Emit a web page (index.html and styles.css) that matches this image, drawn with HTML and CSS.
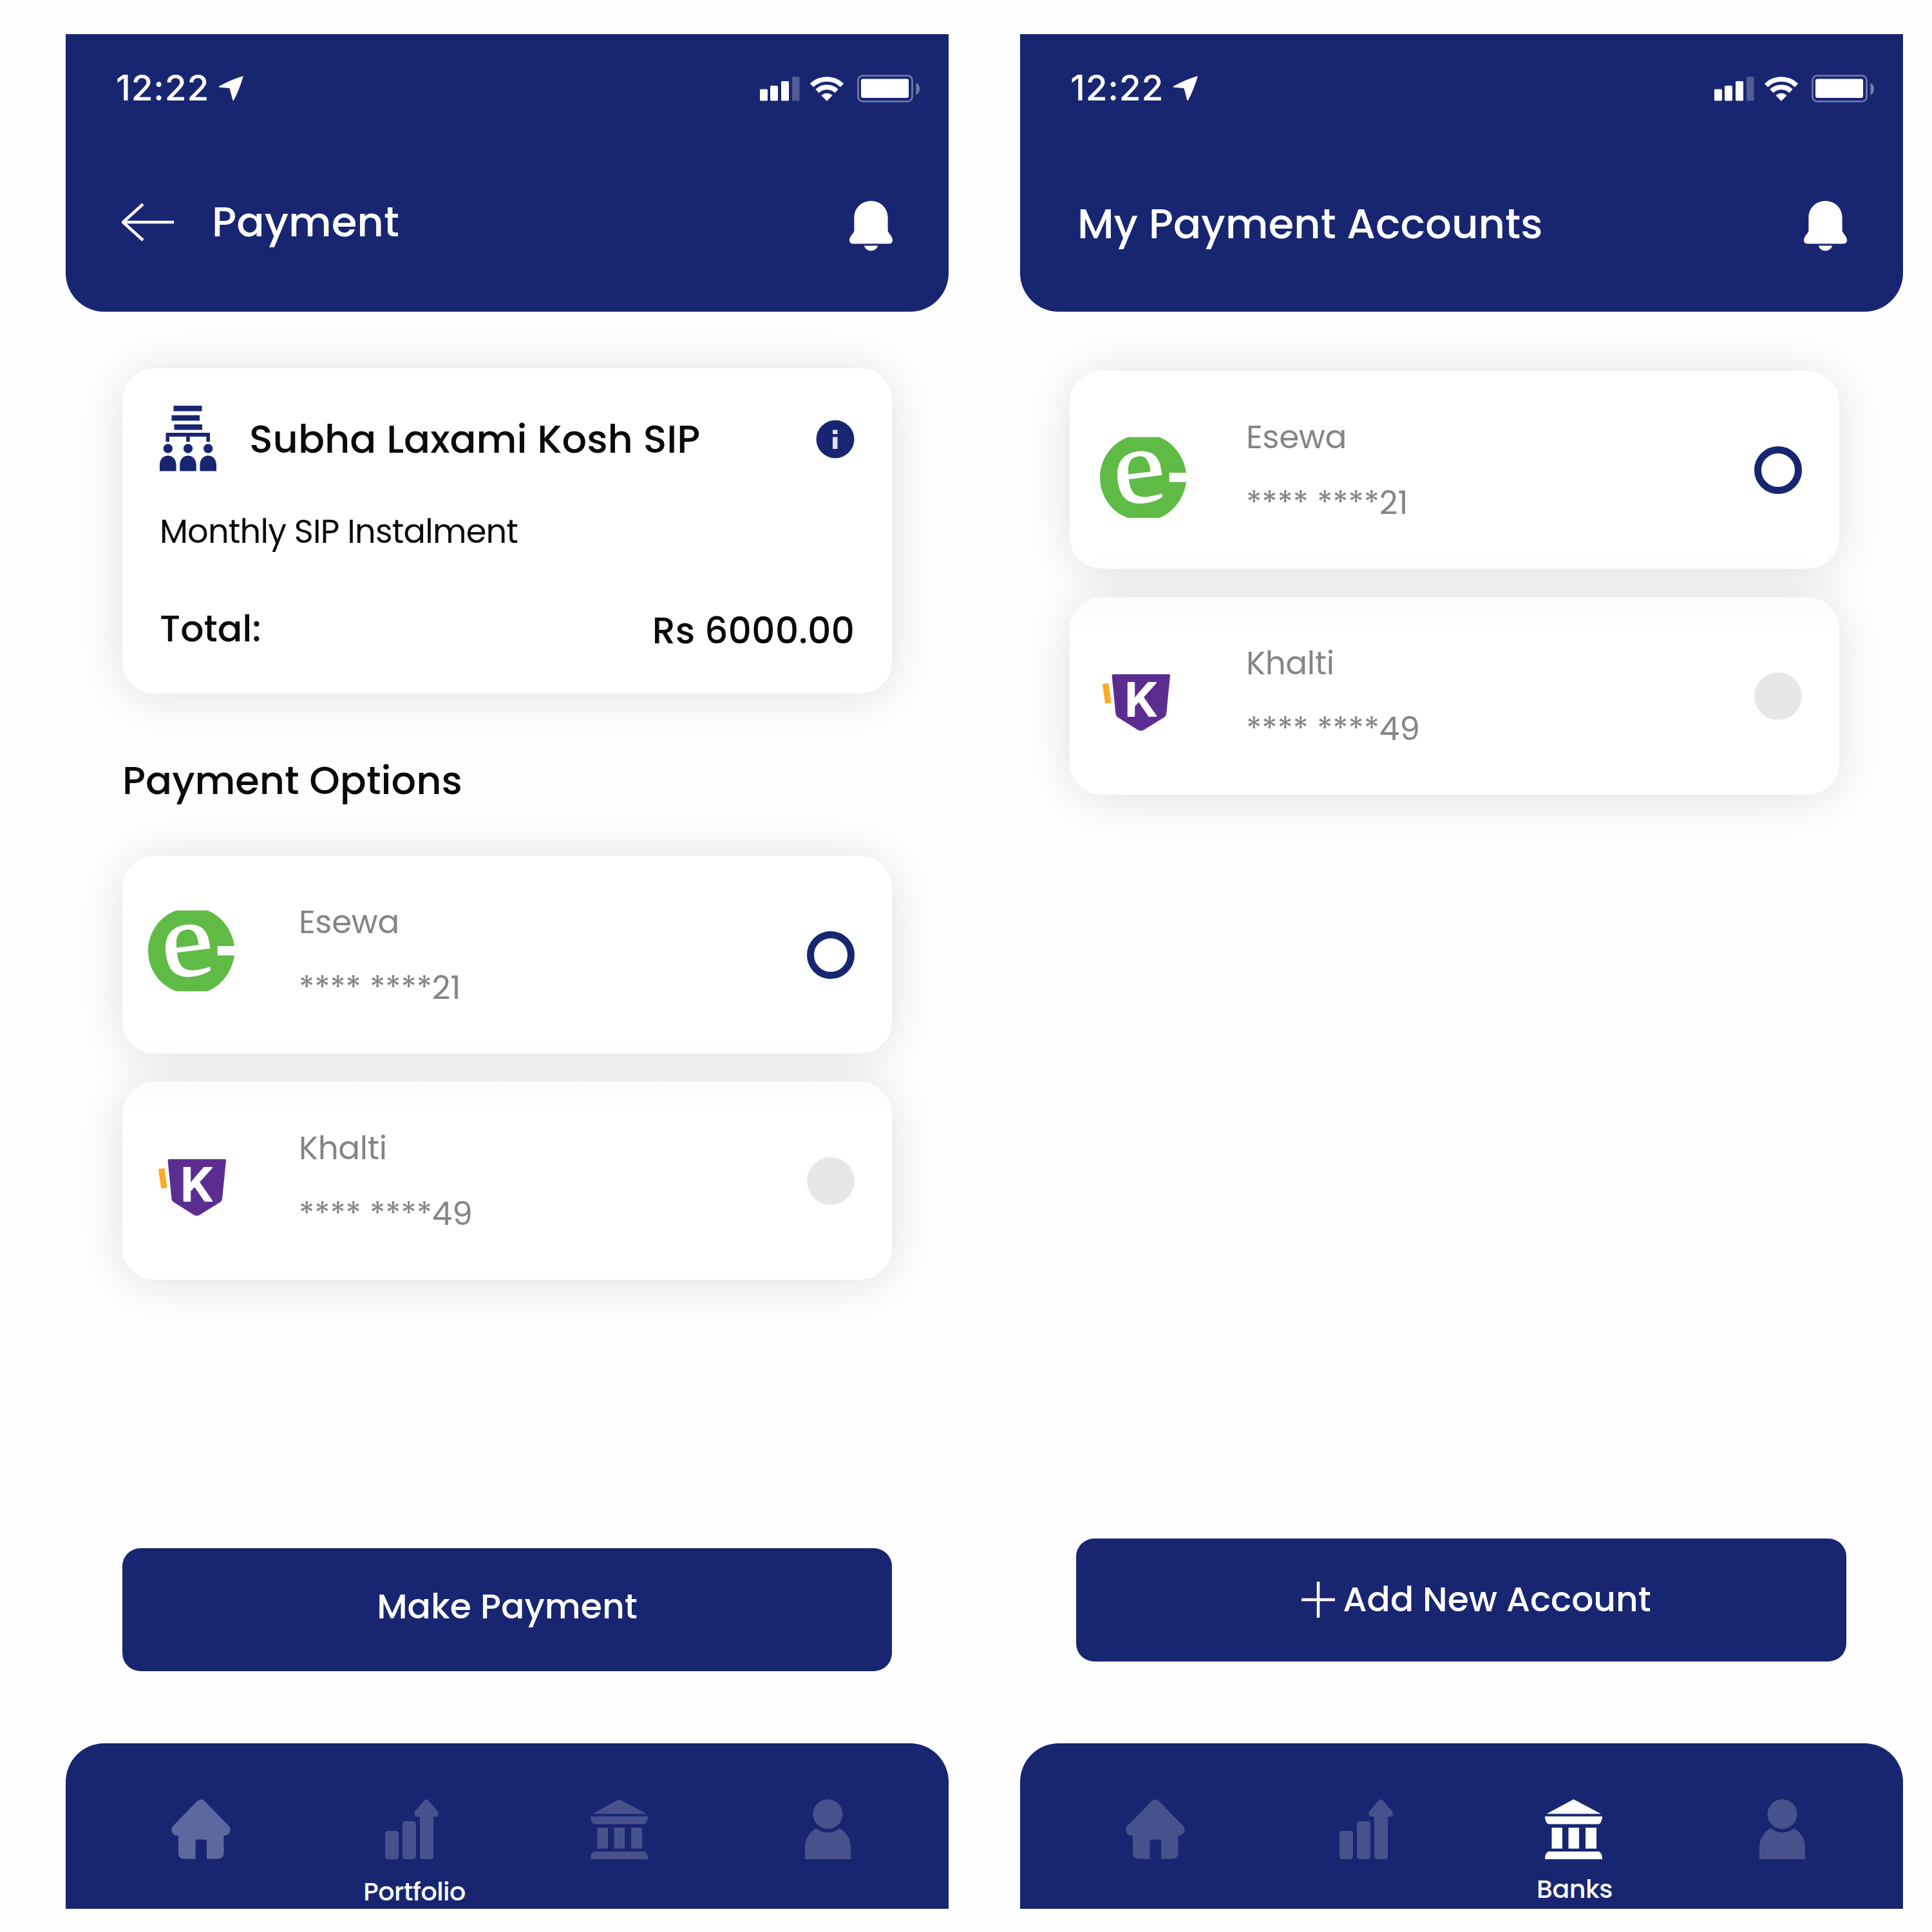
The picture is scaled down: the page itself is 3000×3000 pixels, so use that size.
FILE: index.html
```html
<!DOCTYPE html>
<html lang="en">
<head>
<meta charset="utf-8">
<title>Payments</title>
<link rel="stylesheet" href="styles.css">
</head>
<body>
<svg class="sprite" aria-hidden="true">
  <symbol id="i-location" viewBox="0 0 39 40"><path d="M38 1Q20 6 0 17V18.500L16.500 20 21.500 39H22.800Q31 24 38 1Z" fill="#fff"/></symbol>
  <symbol id="i-signal" viewBox="0 0 62 38"><g fill="#fff"><rect x="0" y="19.500" width="12" height="18" rx="1.500"/><rect x="16" y="14" width="12" height="23.500" rx="1.500"/><rect x="33" y="7" width="12" height="30.500" rx="1.500"/><rect x="50" y="0" width="11.500" height="37.500" rx="1.500" opacity=".25"/></g></symbol>
  <symbol id="i-wifi" viewBox="0 0 52 38"><g fill="none" stroke="#fff" stroke-width="7.600"><path d="M2.500 13.500A34 34 0 0 1 49.500 13.500"/><path d="M11 22.500A21.500 21.500 0 0 1 41 22.500"/></g><path d="M17.500 29.200A12.500 12.500 0 0 1 34.500 29.200L26 38Z" fill="#fff"/></symbol>
  <symbol id="i-battery" viewBox="0 0 98 43"><rect x="1.500" y="1.500" width="84" height="40" rx="7" fill="none" stroke="#fff" stroke-opacity=".4" stroke-width="2.600"/><rect x="6" y="6.500" width="74" height="29.500" rx="3" fill="#fff"/><path d="M91.500 12.500Q97 15.500 97 22T91.500 31.500Z" fill="#fff" opacity=".4"/></symbol>
  <symbol id="i-bell" viewBox="0 0 68 79"><path d="M34 0C49 0 60.500 11.500 60.500 26V47Q61 49 64 53 68 58 68 62 67.500 67.500 62 67.500H6Q.500 67.500 0 62 0 58 4 53 7 49 7.500 47V26C7.500 11.500 19 0 34 0ZM23 70.500H45Q42 78.500 34 78.500T23 70.500Z" fill="#fff"/></symbol>
  <symbol id="i-sip" viewBox="0 0 88 103"><g fill="#182672"><path d="M21.500 0H65.500V8.500H21.500ZM18.500 14.700H62V23.200H18.500ZM22.500 29H66V37.500H22.500ZM9.500 42H78V56H72.500V48H46.800V56H41.200V48H15V56H9.500Z"/><circle cx="12.800" cy="66.500" r="7.200"/><circle cx="44" cy="66.500" r="7.200"/><circle cx="75.200" cy="66.500" r="7.200"/><path d="M0 101.500V92C0 72.500 25.600 72.500 25.600 92V101.500ZM31.200 101.500V92C31.200 72.500 56.800 72.500 56.800 92V101.500ZM62.400 101.500V92C62.400 72.500 88 72.500 88 92V101.500Z"/></g></symbol>
  <symbol id="i-esewa" viewBox="0 0 136 127"><path d="M45 0H92C112 7 131 28 135 56H108.500V70.500H135C131 98 113 119 92 127H45C20 119 0 94 0 63.500S20 8 45 0Z" fill="#60bb46"/></symbol>
  <symbol id="i-khalti" viewBox="0 0 107 89"><path d="M2 16 9.500 15 13.500 43.500 6 44.500Z" fill="#fdaa2a" stroke="#fdaa2a" stroke-width="2" stroke-linejoin="round"/><path d="M18 0H104.500Q106 0 106 2L100 62Q99.500 65.500 96.500 67L65 86.500Q60.500 89 56 86.500L25 67Q22 65.500 21.500 62L15.500 2Q15.500 0 18 0Z" fill="#5c2d91"/></symbol>
  <symbol id="i-home" viewBox="0 0 92 93"><path d="M40.500 2.500Q46 -2 51.500 2.500L90 42Q94 49 88 54.500 86 56.500 81.500 56.500V83Q81 92.500 72 92.500H55V66Q55 62.500 52 62.500H41Q37.500 62.500 37.500 66V92.500H20Q11 92 11 83V56.500Q6 56.500 3.500 54.500 -2 49 2 42Z"/></symbol>
  <symbol id="i-chart" viewBox="0 0 83 93"><path d="M5 49H16Q21 49 21 54V88Q21 93 16 93H5Q0 93 0 88V54Q0 49 5 49ZM32 34H43Q48 34 48 39V88Q48 93 43 93H32Q27 93 27 88V39Q27 34 32 34ZM60.500 2Q64 -2 67.500 2L82 19Q83.500 22 82 25 81 27 75 27V88Q75 93 70 93H59Q54 93 54 88V27Q47.500 27 46 25 44.500 22 46 19Z"/></symbol>
  <symbol id="i-bank" viewBox="0 0 89 93"><path d="M44.500 0 87 22.500H2.500ZM0 26.500H89V29Q87 38.500 83 38.500H6Q2 38.500 0 29ZM10.500 44H27V76.500H10.500ZM36.500 44H53V76.500H36.500ZM63 44H80V76.500H63ZM5 81H84Q89 84 89 93H0Q0 84 5 81Z"/></symbol>
  <symbol id="i-user" viewBox="0 0 71 93"><circle cx="35.500" cy="23" r="23"/><path d="M17.500 45Q25 51.500 35.500 51.500T53.500 45Q71 55 71 76V93H0V76Q0 55 17.500 45Z"/></symbol>
</svg>

<div class="board">
  <section class="phone">
    <header class="header">
      <div class="status">
        <span class="time">12:22</span>
        <svg class="location"><use href="#i-location"/></svg>
        <div class="indicators">
          <svg class="signal"><use href="#i-signal"/></svg>
          <svg class="wifi"><use href="#i-wifi"/></svg>
          <svg class="battery"><use href="#i-battery"/></svg>
        </div>
      </div>
      <div class="titlebar">
        <svg class="back" viewBox="0 0 82 60"><path d="M81 30H2M33 2 2 30 33 58" fill="none" stroke="#fff" stroke-width="4.500"/></svg>
        <h1 class="title title-payment">Payment</h1>
        <svg class="bell"><use href="#i-bell"/></svg>
      </div>
    </header>
    <main class="content">
      <article class="card summary">
        <div class="summary-head">
          <svg class="sip"><use href="#i-sip"/></svg>
          <h2 class="plan">Subha Laxami Kosh SIP</h2>
          <svg class="info" viewBox="0 0 60 60"><circle cx="30" cy="30" r="29.500" fill="#182672"/><path d="M26 15.500H33.500V22H26ZM26 26.500H33.500V45H26Z" fill="#dfe2ee"/></svg>
        </div>
        <p class="note">Monthly SIP Instalment</p>
        <div class="total">
          <span class="total-label">Total:</span>
          <span class="total-value">Rs 6000.00</span>
        </div>
      </article>
      <h2 class="section-title">Payment Options</h2>
      <div class="options">
        <article class="card option">
          <div class="logo-cell"><svg class="esewa" viewBox="0 0 136 127"><use href="#i-esewa" width="136" height="127"/><text class="logo-e" transform="translate(26 107) rotate(-7) scale(1.1 1)">e</text></svg></div>
          <div class="account">
            <span class="name">Esewa</span>
            <span class="number">**** ****21</span>
          </div>
          <span class="radio radio-on"></span>
        </article>
        <article class="card option option-next">
          <div class="logo-cell"><svg class="khalti" viewBox="0 0 107 89"><use href="#i-khalti" width="107" height="89"/><text class="logo-k" x="35.500" y="65">K</text></svg></div>
          <div class="account">
            <span class="name">Khalti</span>
            <span class="number">**** ****49</span>
          </div>
          <span class="radio"></span>
        </article>
      </div>
      <button class="action action-pay">Make Payment</button>
    </main>
    <nav class="tabs">
      <a class="tab tab-soft"><svg class="home"><use href="#i-home"/></svg></a>
      <a class="tab"><svg class="chart"><use href="#i-chart"/></svg><span class="tab-label label-portfolio">Portfolio</span></a>
      <a class="tab"><svg class="bank"><use href="#i-bank"/></svg></a>
      <a class="tab"><svg class="user"><use href="#i-user"/></svg></a>
    </nav>
  </section>

  <section class="phone phone-accounts">
    <header class="header">
      <div class="status">
        <span class="time">12:22</span>
        <svg class="location"><use href="#i-location"/></svg>
        <div class="indicators">
          <svg class="signal"><use href="#i-signal"/></svg>
          <svg class="wifi"><use href="#i-wifi"/></svg>
          <svg class="battery"><use href="#i-battery"/></svg>
        </div>
      </div>
      <div class="titlebar">
        <h1 class="title title-accounts">My Payment Accounts</h1>
        <svg class="bell"><use href="#i-bell"/></svg>
      </div>
    </header>
    <main class="content">
      <div class="options">
        <article class="card option">
          <div class="logo-cell"><svg class="esewa" viewBox="0 0 136 127"><use href="#i-esewa" width="136" height="127"/><text class="logo-e" transform="translate(26 107) rotate(-7) scale(1.1 1)">e</text></svg></div>
          <div class="account">
            <span class="name">Esewa</span>
            <span class="number">**** ****21</span>
          </div>
          <span class="radio radio-on"></span>
        </article>
        <article class="card option option-next">
          <div class="logo-cell"><svg class="khalti" viewBox="0 0 107 89"><use href="#i-khalti" width="107" height="89"/><text class="logo-k" x="35.500" y="65">K</text></svg></div>
          <div class="account">
            <span class="name">Khalti</span>
            <span class="number">**** ****49</span>
          </div>
          <span class="radio"></span>
        </article>
      </div>
      <button class="action action-add">
        <svg class="plus" viewBox="0 0 52 56"><path d="M26 0V56M0 28H52" stroke="#fff" stroke-width="4.500"/></svg>
        Add New Account
      </button>
    </main>
    <nav class="tabs">
      <a class="tab"><svg class="home"><use href="#i-home"/></svg></a>
      <a class="tab"><svg class="chart"><use href="#i-chart"/></svg></a>
      <a class="tab tab-active"><svg class="bank"><use href="#i-bank"/></svg><span class="tab-label label-banks">Banks</span></a>
      <a class="tab"><svg class="user"><use href="#i-user"/></svg></a>
    </nav>
  </section>
</div>
</body>
</html>
```
FILE: styles.css
```css
:root {
  --navy: #182672;
  --muted: #858585;
}

* { box-sizing: border-box; }

body {
  margin: 0;
  background: #fefefe;
  color: #0a0a0a;
  font-family: Poppins, Inter, "Liberation Sans", sans-serif;
  font-weight: 500;
}

h1, h2, p { margin: 0; font-weight: 500; }
svg { display: block; flex: none; }
.sprite { position: absolute; width: 0; height: 0; }

.board {
  display: flex;
  gap: 111px;
  width: 3000px;
  height: 3000px;
  padding: 53px 0 36px 102px;
}

.phone {
  display: flex;
  flex-direction: column;
  width: 1371px;
  height: 2911px;
}

/* Header */
.header {
  height: 431px;
  padding-top: 53px;
  background: var(--navy);
  border-radius: 0 0 60px 60px;
  color: #fff;
}
.status {
  display: flex;
  align-items: center;
  height: 60px;
  padding: 0 44px 0 78px;
}
.time { font-family: Inter, "Liberation Sans", sans-serif; font-size: 55px; font-weight: 550; line-height: 60px; letter-spacing: .8px; }
.location { width: 39px; height: 40px; margin: 2px 0 0 15px; }
.indicators { display: flex; align-items: center; margin: 3px 0 0 auto; }
.signal { width: 62px; height: 38px; }
.wifi { width: 52px; height: 38px; margin-left: 16px; }
.battery { width: 98px; height: 43px; margin-left: 21px; }

.titlebar {
  display: flex;
  align-items: center;
  height: 80px;
  margin-top: 139px;
  padding: 0 87px 0 87px;
}
.back { width: 82px; height: 60px; }
.title { font-size: 64.2px; line-height: 80px; white-space: nowrap; }
.title-payment { margin-left: 58px; }
.title-accounts { padding: 6px 0 0 2px; }
.bell { width: 67px; height: 78px; margin: 12px 0 0 auto; }

/* Content */
.content {
  flex: 1;
  display: flex;
  flex-direction: column;
  padding: 88px 88px 112px;
}
.card {
  background: #fff;
  border-radius: 50px;
  box-shadow: 0 4px 80px rgba(0, 0, 0, .12);
}

.summary { height: 505px; padding: 58px; }
.summary-head { display: flex; align-items: center; height: 103px; }
.sip { width: 88px; height: 103px; }
.plan { margin-left: 51px; font-size: 60.6px; line-height: 72px; white-space: nowrap; }
.info { width: 60px; height: 60px; margin-left: auto; }
.note {
  margin-top: 61px;
  font-size: 51px;
  font-weight: 400;
  line-height: 62px;
  letter-spacing: -.8px;
}
.total {
  display: flex;
  justify-content: space-between;
  margin-top: 87px;
  font-size: 57px;
  line-height: 66px;
}
.total-value { padding-top: 3px; }

.section-title {
  margin: 99px 0 81px;
  font-size: 60.6px;
  line-height: 72px;
}

.options { display: flex; flex-direction: column; gap: 44px; }
.option {
  display: flex;
  align-items: flex-start;
  height: 307px;
  padding-right: 58px;
}
.option-next { background: linear-gradient(#fbfbfb, #fff 60px); }
.logo-cell { width: 274px; }
.esewa, .khalti { overflow: visible; }
.esewa { width: 135px; height: 127px; margin: 84px 0 0 40px; }
.khalti { width: 107px; height: 89px; margin: 120px 0 0 55px; }
.logo-e { font: 400 168px "Liberation Serif", serif; fill: #fff; stroke: #fff; stroke-width: 1px; }
.logo-k { font: 600 72px Inter, sans-serif; fill: #fff; stroke: #fff; stroke-width: 2px; stroke-linejoin: round; }

.account {
  display: flex;
  flex-direction: column;
  gap: 42px;
  padding-top: 73px;
  color: var(--muted);
  font-size: 50px;
  font-weight: 400;
  line-height: 60px;
}
.name { letter-spacing: -.3px; }
.number { white-space: nowrap; letter-spacing: -.1px; }
.radio {
  width: 74px;
  height: 74px;
  margin: 117px 0 0 auto;
  border-radius: 50%;
  background: #e7e7e7;
}
.radio-on { background: #fff; border: 11px solid var(--navy); }

.phone-accounts .content { padding: 92px 88px 127px 77px; }
.phone-accounts .options { width: 1195px; }
.phone-accounts .esewa { margin: 102px 0 0 47px; }
.phone-accounts .khalti { margin: 120px 0 0 50px; }

.action {
  display: flex;
  align-items: center;
  justify-content: center;
  height: 191px;
  margin-top: auto;
  border: 0;
  border-radius: 28px;
  background: var(--navy);
  color: #fff;
  font: inherit;
}
.action-pay { padding: 0 0 10px; font-size: 53.8px; }
.action-add {
  gap: 12px;
  width: 1196px;
  margin-left: 10px;
  padding: 0 0 2px 47px;
  font-size: 53.5px;
}
.plus { width: 52px; height: 56px; }

/* Bottom tabs */
.tabs {
  display: grid;
  grid-template-columns: 327px 329px 315px 333px;
  height: 257px;
  padding: 87px 0 0 46px;
  border-radius: 60px 60px 0 0;
  background: var(--navy);
  color: #fff;
}
.tab { display: flex; flex-direction: column; align-items: center; }
.tab svg { height: 93px; fill: #47528d; }
.tab-soft svg { fill: #5d689f; }
.tab-active svg { fill: #fff; }
.home { width: 92px; }
.chart { width: 83px; }
.bank { width: 89px; }
.user { width: 71px; }
.tab-label { font-size: 39.5px; line-height: 50px; letter-spacing: -.5px; }
.label-portfolio { margin: 26px 0 0 8px; }
.label-banks { margin: 22px 0 0 3px; }
```
